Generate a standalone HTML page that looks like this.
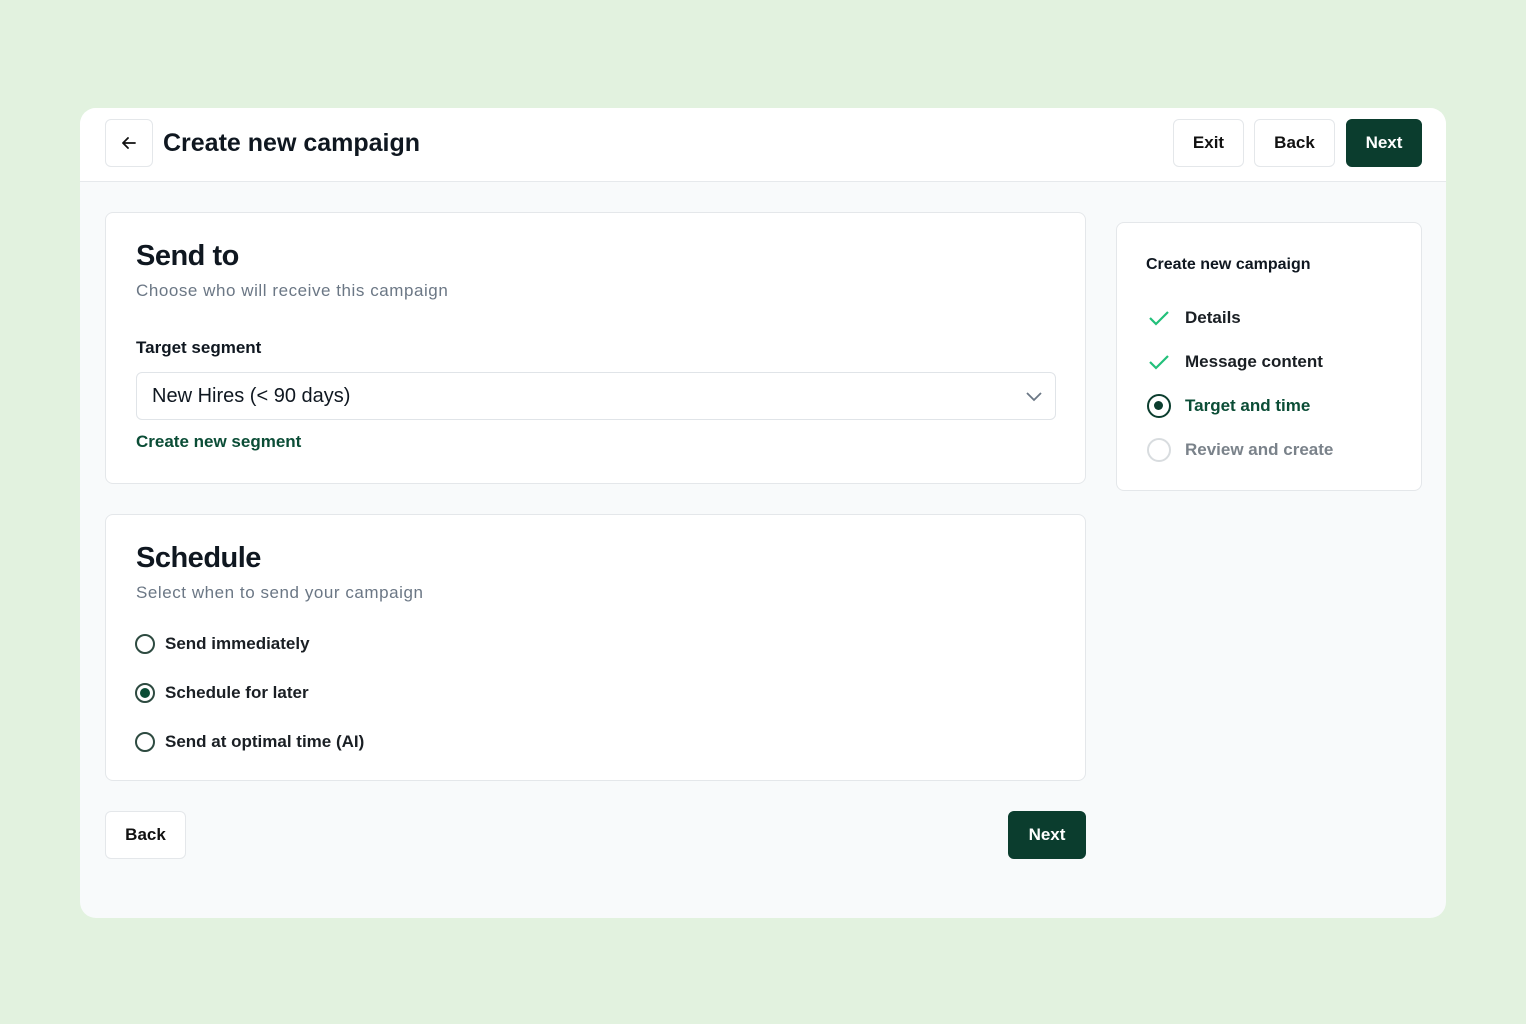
<!DOCTYPE html>
<html><head><meta charset="utf-8"><style>
*{box-sizing:border-box;margin:0;padding:0}
body{width:1526px;height:1024px;background:#e2f2df;font-family:"Liberation Sans",sans-serif;color:#0f1720;position:relative;overflow:hidden}
.abs{position:absolute}
.wrap{left:80px;top:108px;width:1366px;height:810px;background:#f8fafb;border-radius:16px;overflow:hidden}
.hdr{left:0;top:0;width:1366px;height:74px;background:#fff;border-bottom:1px solid #e6e9ec}
.btn{position:absolute;border:1px solid #e4e7ea;border-radius:6px;background:#fff;font-size:17px;font-weight:bold;display:flex;align-items:center;justify-content:center;color:#111}
.prim{background:#0b3d2e;color:#fff;border-color:#0b3d2e}
.card{position:absolute;background:#fff;border:1px solid #e4e7ea;border-radius:8px}
.h2{font-size:29px;font-weight:bold;letter-spacing:-0.5px}
.sub{font-size:17px;color:#6b7785;letter-spacing:0.55px}
.radio{position:absolute;width:20px;height:20px;border:2px solid #2d4a40;border-radius:50%}
.lbl{position:absolute;font-size:17px;font-weight:bold;color:#1a1f24}
</style></head><body>
<div class="abs wrap">
 <div class="abs hdr">
  <div class="btn" style="left:25px;top:11px;width:48px;height:48px">
   <svg width="18" height="18" viewBox="0 0 18 18"><path d="M15 9H3M8 4L3 9l5 5" fill="none" stroke="#111" stroke-width="1.8" stroke-linecap="round" stroke-linejoin="round"/></svg></div>
  <div class="abs" style="left:83px;top:21px;font-size:25px;font-weight:bold">Create new campaign</div>
  <div class="btn" style="left:1093px;top:11px;width:71px;height:48px">Exit</div>
  <div class="btn" style="left:1174px;top:11px;width:81px;height:48px">Back</div>
  <div class="btn prim" style="left:1266px;top:11px;width:76px;height:48px">Next</div>
 </div>
</div>
<div class="card" style="left:105px;top:212px;width:981px;height:272px">
 <div class="abs h2" style="left:30px;top:27px">Send to</div>
 <div class="abs sub" style="left:30px;top:68px">Choose who will receive this campaign</div>
 <div class="abs" style="left:30px;top:125px;font-size:17px;font-weight:bold">Target segment</div>
 <div class="abs" style="left:30px;top:159px;width:920px;height:48px;border:1px solid #e0e4e8;border-radius:6px;font-size:20px;padding:12px 15px">New Hires (&lt; 90 days)
  <svg class="abs" style="right:12px;top:16px" width="18" height="14" viewBox="0 0 18 14"><path d="M2 4l7 7 7-7" fill="none" stroke="#6b7785" stroke-width="1.8"/></svg></div>
 <div class="abs" style="left:30px;top:219px;font-size:17px;font-weight:bold;color:#0b4d36">Create new segment</div>
</div>
<div class="card" style="left:105px;top:514px;width:981px;height:267px">
 <div class="abs h2" style="left:30px;top:27px">Schedule</div>
 <div class="abs sub" style="left:30px;top:68px">Select when to send your campaign</div>
 <div class="radio" style="left:29px;top:119px"></div><div class="lbl" style="left:59px;top:119px">Send immediately</div>
 <div class="radio" style="left:29px;top:168px"><div class="abs" style="left:3px;top:3px;width:10px;height:10px;border-radius:50%;background:#0b4d36"></div></div><div class="lbl" style="left:59px;top:168px">Schedule for later</div>
 <div class="radio" style="left:29px;top:217px"></div><div class="lbl" style="left:59px;top:217px">Send at optimal time (AI)</div>
</div>
<div class="btn" style="left:105px;top:811px;width:81px;height:48px">Back</div>
<div class="btn prim" style="left:1008px;top:811px;width:78px;height:48px">Next</div>
<div class="card" style="left:1116px;top:222px;width:306px;height:269px">
 <div class="abs" style="left:29px;top:33px;font-size:16px;font-weight:bold">Create new campaign</div>
 <svg class="abs" style="left:31px;top:86px" width="22" height="18" viewBox="0 0 22 18"><path d="M2 9l6 6L20 3" fill="none" stroke="#22c07a" stroke-width="2.2"/></svg>
 <div class="lbl" style="left:68px;top:85px">Details</div>
 <svg class="abs" style="left:31px;top:130px" width="22" height="18" viewBox="0 0 22 18"><path d="M2 9l6 6L20 3" fill="none" stroke="#22c07a" stroke-width="2.2"/></svg>
 <div class="lbl" style="left:68px;top:129px">Message content</div>
 <div class="abs" style="left:30px;top:171px;width:24px;height:24px;border:2.5px solid #0b3d2e;border-radius:50%"><div class="abs" style="left:5px;top:5px;width:9px;height:9px;border-radius:50%;background:#0b3d2e"></div></div>
 <div class="lbl" style="left:68px;top:173px;color:#0b4d36">Target and time</div>
 <div class="abs" style="left:30px;top:215px;width:24px;height:24px;border:2px solid #d8dcdf;border-radius:50%"></div>
 <div class="lbl" style="left:68px;top:217px;color:#7a828a">Review and create</div>
</div>
</body></html>
